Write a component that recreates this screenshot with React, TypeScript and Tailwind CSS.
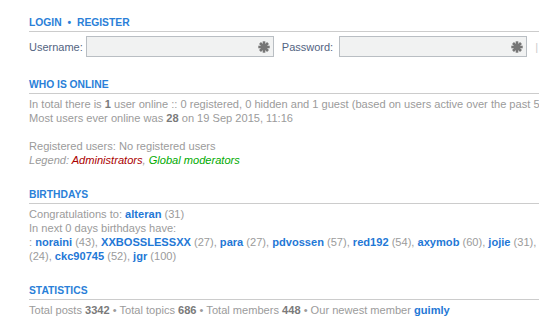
import React from "react";

const Star = () => (
  <svg width="12" height="12" viewBox="0 0 12 12" className="shrink-0">
    <g stroke="#767676" strokeWidth="2.6" strokeLinecap="butt">
      <line x1="6" y1="0.3" x2="6" y2="11.7" />
      <line x1="0.3" y1="6" x2="11.7" y2="6" />
      <line x1="2" y1="2" x2="10" y2="10" />
      <line x1="10" y1="2" x2="2" y2="10" />
    </g>
  </svg>
);

const Heading = ({ children }: { children: React.ReactNode }) => (
  <h3 className="text-[10.3px] font-bold leading-[14px] uppercase text-[#2a7fd8] pt-[1px] pb-[1px] border-b border-[#cccccc]">
    {children}
  </h3>
);

const L = ({ children }: { children: React.ReactNode }) => (
  <a className="font-bold text-[#1f78d6]">{children}</a>
);
const B = ({ children }: { children: React.ReactNode }) => (
  <b className="font-bold text-[#7a7a7a]">{children}</b>
);

const Input = () => (
  <div className="w-[188px] h-[21px] border border-[#b9bec3] bg-[#f1f2f2] flex items-center justify-end pr-[3px]">
    <Star />
  </div>
);

export default function App() {
  return (
    <div
      className="w-[539px] h-[331px] overflow-hidden bg-white"
      style={{ fontFamily: '"Liberation Sans", Arial, sans-serif' }}
    >
      <div className="w-[640px] pl-[29px] pt-[15px] text-[11.08px] leading-[14px] text-[#9b9b9b] whitespace-nowrap">
        <Heading>
          Login <span className="mx-[3px]">•</span> Register
        </Heading>
        <div className="mt-[4px] flex items-center text-[#536482] text-[11px]">
          <span className="mr-[3px]">Username:</span>
          <Input />
          <span className="ml-[8px] mr-[6px]">Password:</span>
          <Input />
          <span className="ml-[8px] text-[#cccccc]">|</span>
        </div>

        <div className="mt-[20px]">
          <Heading>Who is online</Heading>
          <div className="mt-[3px]">
            <div>
              In total there is <B>1</B> user online :: 0 registered, 0 hidden and 1 guest (based on users active over the past 5 minutes)
            </div>
            <div>
              Most users ever online was <B>28</B> on 19 Sep 2015, 11:16
            </div>
            <div className="mt-[14px]">Registered users: No registered users</div>
            <div>
              <em>Legend: </em>
              <em className="text-[#aa0000]">Administrators</em>
              <em>, </em>
              <em className="text-[#00aa00]">Global moderators</em>
            </div>
          </div>
        </div>

        <div className="mt-[20px]">
          <Heading>Birthdays</Heading>
          <div className="mt-[3px]">
            <div>
              Congratulations to: <L>alteran</L> (31)
            </div>
            <div>In next 0 days birthdays have:</div>
            <div>
              : <L>noraini</L> (43), <L>XXBOSSLESSXX</L> (27), <L>para</L> (27), <L>pdvossen</L> (57), <L>red192</L> (54), <L>axymob</L> (60), <L>jojie</L> (31),{" "}
              <span className="ml-[4px]">
                <L>mike</L>
              </span>
            </div>
            <div>
              (24), <L>ckc90745</L> (52), <L>jgr</L> (100)
            </div>
          </div>
        </div>

        <div className="mt-[20px]">
          <Heading>Statistics</Heading>
          <div className="mt-[3px]">
            Total posts <B>3342</B> • Total topics <B>686</B> • Total members <B>448</B> • Our newest member <L>guimly</L>
          </div>
        </div>
      </div>
    </div>
  );
}
